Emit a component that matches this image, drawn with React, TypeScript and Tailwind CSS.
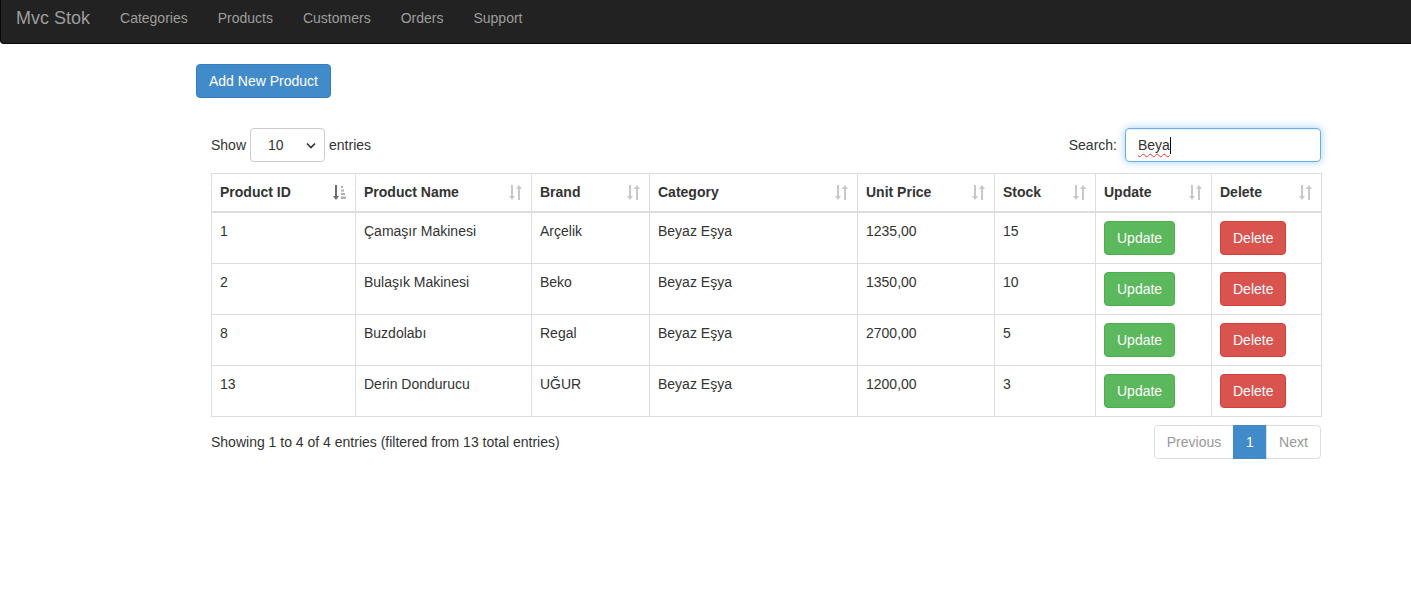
import React from "react";

const SortBoth = () => (
  <svg width="14" height="17" viewBox="0 0 14 17" className="shrink-0">
    <g fill="#c8c8c8">
      <rect x="2" y="1" width="2" height="12" />
      <path d="M0 12 L6 12 L3 16 Z" />
      <rect x="9" y="4" width="2" height="12" />
      <path d="M7 5 L13 5 L10 1 Z" />
    </g>
  </svg>
);

const SortAsc = () => (
  <svg width="14" height="17" viewBox="0 0 14 17" className="shrink-0">
    <g fill="#6b6b6b">
      <rect x="2" y="1" width="2" height="12" />
      <path d="M0 12 L6 12 L3 16 Z" />
    </g>
    <g fill="#b0b0b0">
      <rect x="8" y="2" width="2" height="2" />
      <rect x="8" y="5.5" width="3" height="2" />
      <rect x="8" y="9" width="4" height="2" />
      <rect x="8" y="12.5" width="5" height="2.5" />
    </g>
  </svg>
);

const cols = [
  { label: "Product ID", w: 144, asc: true },
  { label: "Product Name", w: 176 },
  { label: "Brand", w: 118 },
  { label: "Category", w: 208 },
  { label: "Unit Price", w: 137 },
  { label: "Stock", w: 101 },
  { label: "Update", w: 116 },
  { label: "Delete", w: 110 },
];

const rows = [
  ["1", "Çamaşır Makinesi", "Arçelik", "Beyaz Eşya", "1235,00", "15"],
  ["2", "Bulaşık Makinesi", "Beko", "Beyaz Eşya", "1350,00", "10"],
  ["8", "Buzdolabı", "Regal", "Beyaz Eşya", "2700,00", "5"],
  ["13", "Derin Dondurucu", "UĞUR", "Beyaz Eşya", "1200,00", "3"],
];

export default function App() {
  return (
    <div
      className="min-h-[594px] bg-white text-[14px] leading-[20px] text-[#333]"
      style={{ fontFamily: '"Liberation Sans", Arial, Helvetica, sans-serif' }}
    >
      {/* Navbar */}
      <nav className="h-[44px] bg-[#222] border-l border-b border-[#080808] rounded-bl-[4px] flex items-start pt-[8px]">
        <span className="pl-[15px] pr-[15px] text-[18px] leading-[20px] text-[#9d9d9d]">Mvc Stok</span>
        {["Categories", "Products", "Customers", "Orders", "Support"].map((l) => (
          <span key={l} className="px-[15px] text-[14px] leading-[20px] text-[#9d9d9d]">
            {l}
          </span>
        ))}
      </nav>

      <div className="w-[1140px] ml-[196px] pt-[20px]">
        <button className="h-[34px] px-[12px] bg-[#428bca] border border-[#357ebd] rounded-[4px] text-white text-[14px] leading-[20px]">
          Add New Product
        </button>

        <div className="px-[15px] mt-[30px]">
          {/* controls */}
          <div className="flex justify-between items-center h-[34px]">
            <div className="flex items-center gap-[4px] -mt-[1px]">
              <span>Show</span>
              <div className="w-[75px] h-[34px] border border-[#ccc] rounded-[4px] flex items-center justify-between pl-[17px] pr-[8px] mt-[1px]">
                <span>10</span>
                <svg width="10" height="7" viewBox="0 0 10 7">
                  <path d="M1 1.5 L5 5.5 L9 1.5" fill="none" stroke="#333" strokeWidth="1.6" />
                </svg>
              </div>
              <span>entries</span>
            </div>
            <div className="flex items-center gap-[8px]">
              <span className="-mt-[1px]">Search:</span>
              <div className="w-[196px] h-[34px] border border-[#66afe9] rounded-[4px] flex items-center px-[12px] shadow-[inset_0_1px_1px_rgba(0,0,0,0.075),0_0_8px_rgba(102,175,233,0.6)]">
                <span className="underline decoration-wavy decoration-[#e33] underline-offset-[3px] decoration-[1px]">Beya</span>
                <span className="w-px h-[17px] bg-black" />
              </div>
            </div>
          </div>

          {/* table */}
          <table className="mt-[11px] border-collapse w-[1110px] table-fixed">
            <colgroup>
              {cols.map((c) => (
                <col key={c.label} style={{ width: c.w }} />
              ))}
            </colgroup>
            <thead>
              <tr>
                {cols.map((c) => (
                  <th
                    key={c.label}
                    className="border border-[#ddd] border-b-2 px-[8px] pt-[8px] pb-[9px] text-left font-bold align-bottom"
                  >
                    <div className="flex justify-between items-center">
                      <span>{c.label}</span>
                      {c.asc ? <SortAsc /> : <SortBoth />}
                    </div>
                  </th>
                ))}
              </tr>
            </thead>
            <tbody>
              {rows.map((r) => (
                <tr key={r[0]}>
                  {r.map((v, i) => (
                    <td key={i} className="border border-[#ddd] p-[8px] align-top">
                      {v}
                    </td>
                  ))}
                  <td className="border border-[#ddd] p-[8px] align-top">
                    <button className="h-[34px] px-[12px] bg-[#5cb85c] border border-[#4cae4c] rounded-[4px] text-white">
                      Update
                    </button>
                  </td>
                  <td className="border border-[#ddd] p-[8px] align-top">
                    <button className="h-[34px] px-[12px] bg-[#d9534f] border border-[#d43f3a] rounded-[4px] text-white">
                      Delete
                    </button>
                  </td>
                </tr>
              ))}
            </tbody>
          </table>

          {/* footer */}
          <div className="flex justify-between items-start mt-[8px]">
            <div className="pt-[7px]">Showing 1 to 4 of 4 entries (filtered from 13 total entries)</div>
            <div className="flex">
              <span className="h-[34px] w-[80px] justify-center flex items-center border border-[#ddd] rounded-l-[4px] text-[#999]">Previous</span>
              <span className="h-[34px] w-[34px] flex items-center justify-center bg-[#428bca] border border-[#428bca] text-white -ml-px">1</span>
              <span className="h-[34px] w-[55px] justify-center flex items-center border border-[#ddd] rounded-r-[4px] text-[#999] -ml-px">Next</span>
            </div>
          </div>
        </div>
      </div>
    </div>
  );
}
